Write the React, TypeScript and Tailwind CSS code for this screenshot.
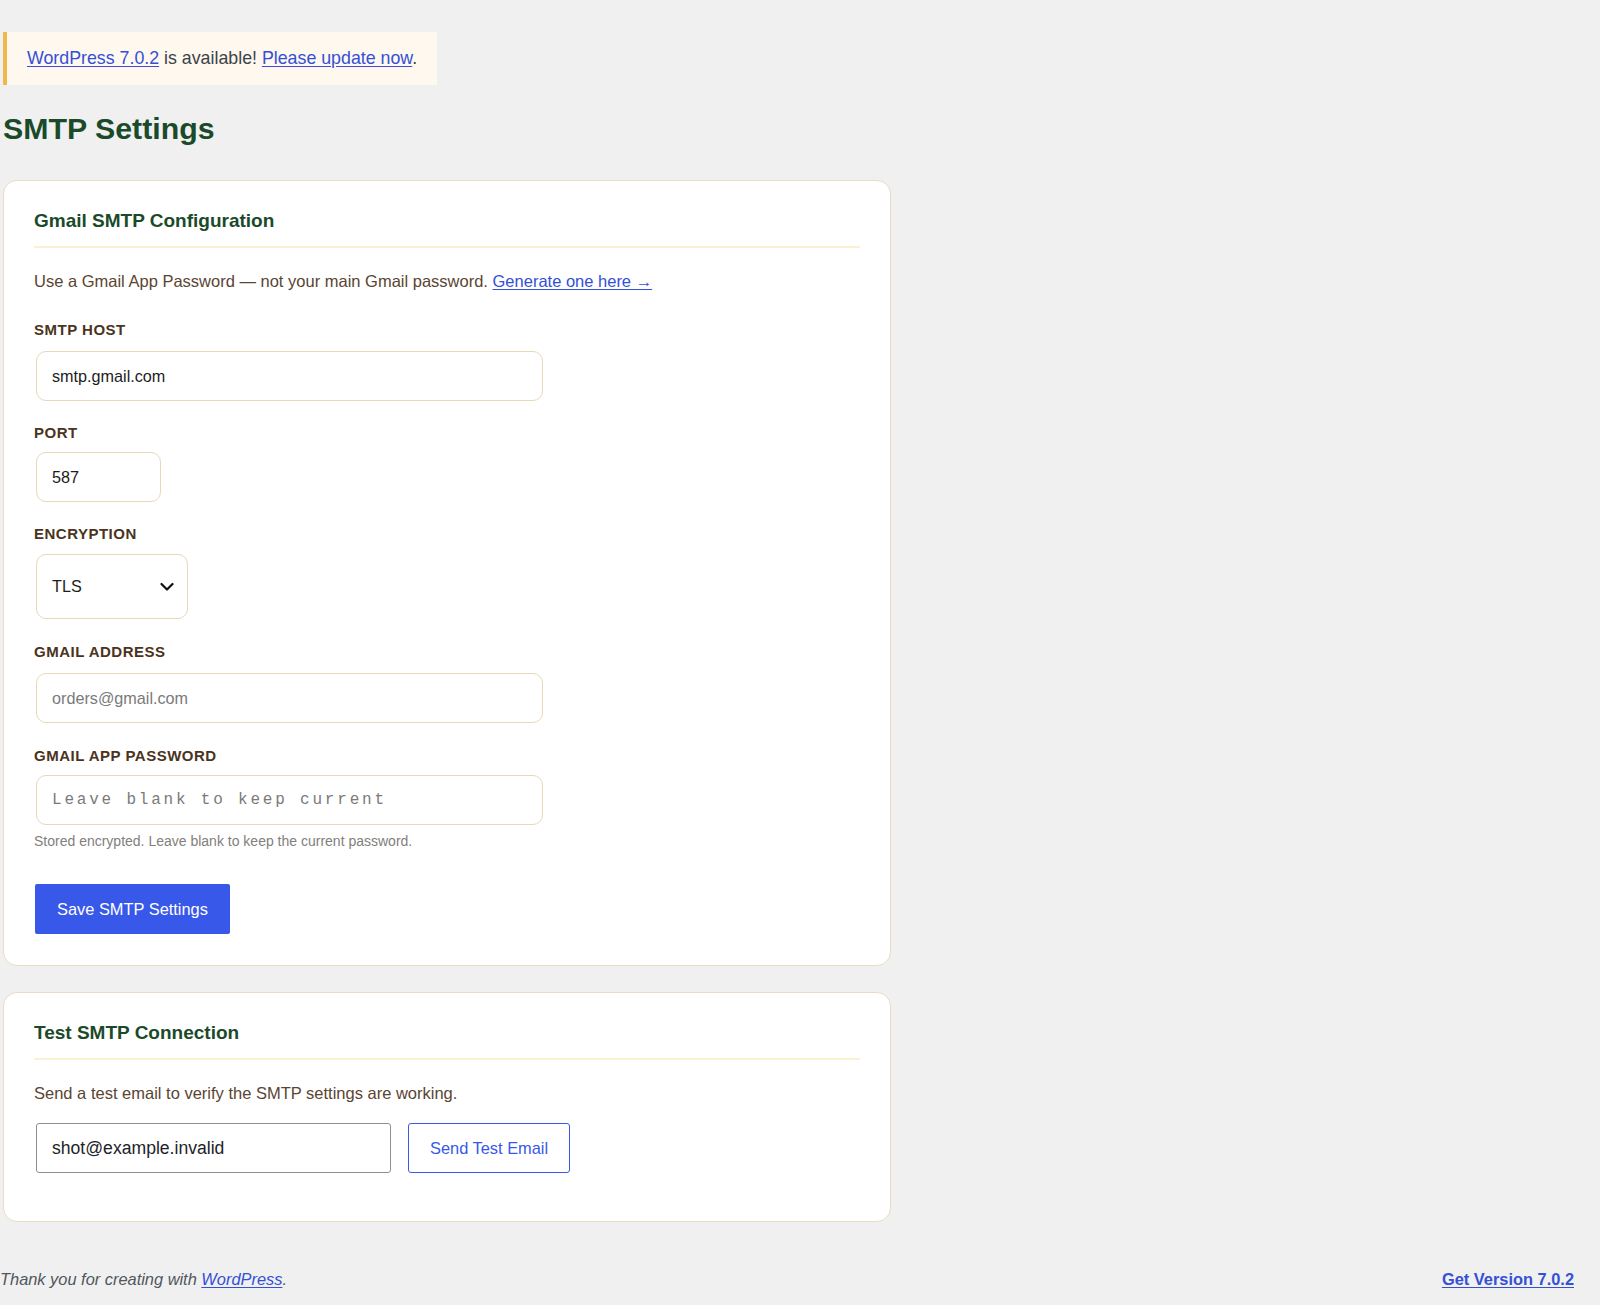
import type { ReactNode } from 'react'

const LINK = 'text-[#3450d6] underline underline-offset-2'

function Label({ children }: { children: ReactNode }) {
  return (
    <label className="block text-[15px] leading-[20px] font-bold uppercase tracking-[0.5px] text-[#4a3420]">
      {children}
    </label>
  )
}

function Card({ title, children, className = '' }: { title: string; children: ReactNode; className?: string }) {
  return (
    <section className={`w-[888px] rounded-[14px] border border-[#e9dcc2] bg-white px-[30px] pt-[30px] ${className}`}>
      <h2 className="border-b-2 border-[#fbf0d2] pb-[16px] text-[19px] leading-[19px] font-bold text-[#1b4a2a]">
        {title}
      </h2>
      {children}
    </section>
  )
}

const fieldCls =
  'ml-[2px] block h-[50px] rounded-[10px] border border-[#e8d8b8] bg-white px-[15px] text-[16.2px] text-[#1d1d1d] outline-none placeholder:text-[#7a7a7a]'

export default function App() {
  return (
    <div className="min-h-[1305px] bg-[#f0f0f1] font-['Liberation_Sans',Arial,sans-serif] flex flex-col">
      <div className="pl-[3px] pt-[32px]">
        <div className="inline-block border-l-[4px] border-[#f0b849] bg-[#fef8ee] px-[20px] py-[13px] text-[17.8px] leading-[27px] text-[#3c434a]">
          <a className={LINK} href="#">WordPress 7.0.2</a> is available!{' '}
          <a className={LINK} href="#">Please update now</a>.
        </div>

        <h1 className="mt-[24px] text-[30.3px] leading-[39px] font-bold text-[#1b4a2a]">SMTP Settings</h1>

        <Card title="Gmail SMTP Configuration" className="mt-[32px] pb-[31px]">
          <p className="mt-[21px] text-[16.5px] leading-[24px] text-[#5a4532]">
            Use a Gmail App Password — not your main Gmail password.{' '}
            <a className={LINK} href="#">Generate one here →</a>
          </p>

          <div className="mt-[27px]">
            <Label>SMTP Host</Label>
            <input className={`${fieldCls} mt-[11px] w-[507px]`} defaultValue="smtp.gmail.com" />

            <div className="mt-[22px]">
              <Label>Port</Label>
              <input className={`${fieldCls} mt-[9px] w-[125px]`} defaultValue="587" />
            </div>

            <div className="mt-[22px]">
              <Label>Encryption</Label>
              <div className="relative mt-[10px] ml-[2px] w-[152px]">
                <select
                  className="block h-[65px] w-full appearance-none rounded-[10px] border border-[#e8d8b8] bg-white px-[15px] text-[16.2px] text-[#1d1d1d] outline-none"
                  defaultValue="tls"
                >
                  <option value="tls">TLS</option>
                  <option value="ssl">SSL</option>
                </select>
                <svg
                  className="pointer-events-none absolute right-[14px] top-1/2 -translate-y-1/2"
                  width="14"
                  height="9"
                  viewBox="0 0 14 9"
                  fill="none"
                >
                  <path d="M1.5 1.5 7 7l5.5-5.5" stroke="#111" strokeWidth="2.2" strokeLinecap="round" strokeLinejoin="round" />
                </svg>
              </div>
            </div>

            <div className="mt-[23px]">
              <Label>Gmail Address</Label>
              <input className={`${fieldCls} mt-[11px] w-[507px]`} placeholder="orders@gmail.com" />
            </div>

            <div className="mt-[23px]">
              <Label>Gmail App Password</Label>
              <input
                type="password"
                className={`${fieldCls} mt-[9px] w-[507px] font-['Liberation_Mono',monospace] text-[16px] tracking-[2.8px]`}
                placeholder="Leave blank to keep current"
              />
              <p className="mt-[6px] text-[14px] leading-[20px] text-[#82807c]">
                Stored encrypted. Leave blank to keep the current password.
              </p>
            </div>

            <button className="mt-[33px] ml-px h-[50px] rounded-[2px] bg-[#3858e9] px-[22px] text-[16.4px] text-white">
              Save SMTP Settings
            </button>
          </div>
        </Card>

        <Card title="Test SMTP Connection" className="mt-[26px] pb-[48px]">
          <p className="mt-[21px] text-[16.5px] leading-[24px] text-[#5a4532]">
            Send a test email to verify the SMTP settings are working.
          </p>
          <div className="mt-[18px] flex items-center gap-[17px] pl-[2px]">
            <input
              className="h-[50px] w-[355px] rounded-[3px] border border-[#8c8f94] bg-white px-[15px] text-[17.6px] text-[#1d2327] outline-none"
              defaultValue="shot@example.invalid"
            />
            <button className="h-[50px] rounded-[3px] border border-[#3858e9] bg-white px-[21px] text-[16.4px] text-[#3858e9]">
              Send Test Email
            </button>
          </div>
        </Card>
      </div>

      <footer className="mt-auto flex items-center justify-between pb-[14px] pr-[26px] text-[16.4px] leading-[24px]">
        <p className="italic text-[#50575e]">
          Thank you for creating with <a className={LINK} href="#">WordPress</a>.
        </p>
        <a className={`${LINK} font-bold`} href="#">Get Version 7.0.2</a>
      </footer>
    </div>
  )
}
